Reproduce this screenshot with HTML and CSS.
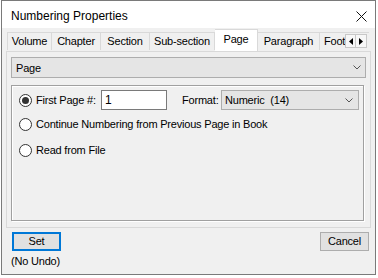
FILE: index.html
```html
<!DOCTYPE html>
<html>
<head>
<meta charset="utf-8">
<link rel="stylesheet" href="styles.css">
</head>
<body>
<div class="window">
  <div class="titlebar">
    <span class="title">Numbering Properties</span>
    <svg class="close" width="11" height="11" viewBox="0 0 11 11"><path d="M0.5 0.5 L10.5 10.5 M10.5 0.5 L0.5 10.5" stroke="#111" stroke-width="1" fill="none"/></svg>
  </div>
  <div class="client">
    <div class="tabstrip">
      <div class="tab t-volume">Volume</div>
      <div class="tab t-chapter">Chapter</div>
      <div class="tab t-section">Section</div>
      <div class="tab t-sub">Sub-section</div>
      <div class="tab t-page selected">Page</div>
      <div class="tab t-para">Paragraph</div>
      <div class="tab t-foot">Footnote</div>
      <div class="tab-scroll">
        <div class="scroll-btn"><svg width="4" height="7" viewBox="0 0 4 7"><path d="M4 0 L0 3.5 L4 7 Z" fill="#000"/></svg></div>
        <div class="scroll-btn"><svg width="4" height="7" viewBox="0 0 4 7"><path d="M0 0 L4 3.5 L0 7 Z" fill="#000"/></svg></div>
      </div>
    </div>
    <div class="tabpage">
      <div class="combo combo-level">
        <span>Page</span>
        <svg class="chev" width="8" height="5" viewBox="0 0 8 5"><path d="M0.5 0.5 L4 4 L7.5 0.5" stroke="#555" stroke-width="1" fill="none"/></svg>
      </div>
      <div class="group">
        <div class="row row1">
          <label class="opt opt-first"><span class="radio checked"></span><span>First Page #:</span></label>
          <div class="textbox">1</div>
          <span class="fmt-label">Format:</span>
          <div class="combo combo-format">
            <span>Numeric&nbsp; (14)</span>
            <svg class="chev" width="8" height="5" viewBox="0 0 8 5"><path d="M0.5 0.5 L4 4 L7.5 0.5" stroke="#555" stroke-width="1" fill="none"/></svg>
          </div>
        </div>
        <div class="row row2">
          <label class="opt"><span class="radio"></span><span>Continue Numbering from Previous Page in Book</span></label>
        </div>
        <div class="row row3">
          <label class="opt"><span class="radio"></span><span>Read from File</span></label>
        </div>
      </div>
    </div>
    <div class="buttons">
      <div class="btn btn-default">Set</div>
      <div class="btn">Cancel</div>
    </div>
    <div class="note">(No Undo)</div>
  </div>
</div>
</body>
</html>
```
FILE: styles.css
```css
html, body {
  margin: 0;
  padding: 0;
}
body {
  background: #ffffff;
  font-family: "Liberation Sans", Arial, sans-serif;
  font-size: 11px;
  color: #000;
  width: 378px;
  height: 278px;
  overflow: hidden;
}
.window {
  margin-left: 1px;
  width: 375px;
  height: 275px;
  box-sizing: border-box;
  border: 1px solid #7a7a7a;
  background: #f0f0f0;
  display: flex;
  flex-direction: column;
}
.titlebar {
  height: 27px;
  background: #ffffff;
  display: flex;
  align-items: flex-start;
  justify-content: space-between;
  flex: none;
}
.title {
  font-size: 12px;
  line-height: 16px;
  padding: 7px 0 0 9px;
  color: #000;
}
.close {
  margin: 10px 8px 0 0;
}
.client {
  flex: 1;
  display: flex;
  flex-direction: column;
}
.tabstrip {
  height: 23px;
  margin: 0 4px 0 5px;
  display: flex;
  align-items: flex-end;
  position: relative;
  overflow: hidden;
  flex: none;
}
.tab {
  flex: none;
  height: 18px;
  box-sizing: border-box;
  border: 1px solid #d9d9d9;
  border-bottom: none;
  border-right: none;
  background: #f0f0f0;
  line-height: 17px;
  text-align: center;
  white-space: nowrap;
  overflow: hidden;
  margin-bottom: 1px;
  letter-spacing: -0.2px;
}
.t-volume { width: 44px; }
.t-chapter { width: 49px; }
.t-section { width: 49px; }
.t-sub { width: 66px; border-right: 1px solid #d9d9d9; }
.t-page { width: 43px; }
.t-para { width: 61px; border-left: none; }
.t-foot { width: 50px; text-align: left; padding-left: 4px; }
.tab.selected {
  height: 23px;
  margin-bottom: -1px;
  background: #ffffff;
  border: 1px solid #d9d9d9;
  border-bottom: none;
  border-left: none;
  line-height: 19px;
  position: relative;
  z-index: 1;
}
.tab-scroll {
  position: absolute;
  left: 338px;
  top: 6px;
  display: flex;
  z-index: 2;
}
.scroll-btn {
  width: 11px;
  height: 14px;
  box-sizing: border-box;
  border: 1px solid #c8c8c8;
  background: #f7f7f7;
  display: flex;
  align-items: center;
  justify-content: center;
}
.scroll-btn + .scroll-btn {
  border-left: none;
}
.tabpage {
  margin: 0 4px;
  height: 177px;
  box-sizing: border-box;
  border: 1px solid #d9d9d9;
  background: #f0f0f0;
  padding: 5px 3px 0 4px;
  flex: none;
}
.combo {
  box-sizing: border-box;
  border: 1px solid #adadad;
  background: #e5e5e5;
  display: flex;
  align-items: center;
  justify-content: space-between;
}
.combo-level {
  height: 21px;
  width: 355px;
  padding: 0 4px 0 4px;
  letter-spacing: -0.2px;
}
.group {
  margin-top: 7px;
  width: 353px;
  height: 136px;
  box-sizing: border-box;
  border: 1px solid #a0a0a0;
  box-shadow: inset 1px 1px 0 #ffffff, 1px 1px 0 #ffffff;
  padding: 4px 0 0 7px;
}
.row {
  display: flex;
  align-items: center;
  height: 20px;
}
.row2 { margin-top: 4px; }
.row3 { margin-top: 6px; }
.opt {
  display: flex;
  align-items: center;
  letter-spacing: -0.2px;
}
.opt-first {
  width: 82px;
}
.radio {
  width: 13px;
  height: 13px;
  box-sizing: border-box;
  border: 1px solid #333333;
  border-radius: 50%;
  background: #ffffff;
  margin-right: 4px;
  display: flex;
  align-items: center;
  justify-content: center;
  flex: none;
}
.radio.checked::after {
  content: "";
  width: 7px;
  height: 7px;
  border-radius: 50%;
  background: #333333;
}
.textbox {
  width: 66px;
  height: 20px;
  box-sizing: border-box;
  border: 1px solid #7a7a7a;
  background: #ffffff;
  padding-left: 3px;
  line-height: 18px;
  font-size: 12px;
}
.fmt-label {
  margin-left: 15px;
  width: 39px;
  letter-spacing: -0.2px;
}
.combo-format {
  width: 138px;
  height: 20px;
  padding: 0 5px 0 3px;
  letter-spacing: -0.2px;
}
.buttons {
  display: flex;
  justify-content: space-between;
  padding: 0 6px 0 10px;
  margin-top: 4px;
}
.btn {
  width: 49px;
  height: 19px;
  box-sizing: border-box;
  border: 1px solid #adadad;
  background: #e1e1e1;
  text-align: center;
  line-height: 17px;
  letter-spacing: -0.2px;
}
.btn-default {
  border: 2px solid #0078d7;
  line-height: 15px;
}
.note {
  padding-left: 9px;
  margin-top: 3px;
  line-height: 14px;
  letter-spacing: -0.2px;
}
```
